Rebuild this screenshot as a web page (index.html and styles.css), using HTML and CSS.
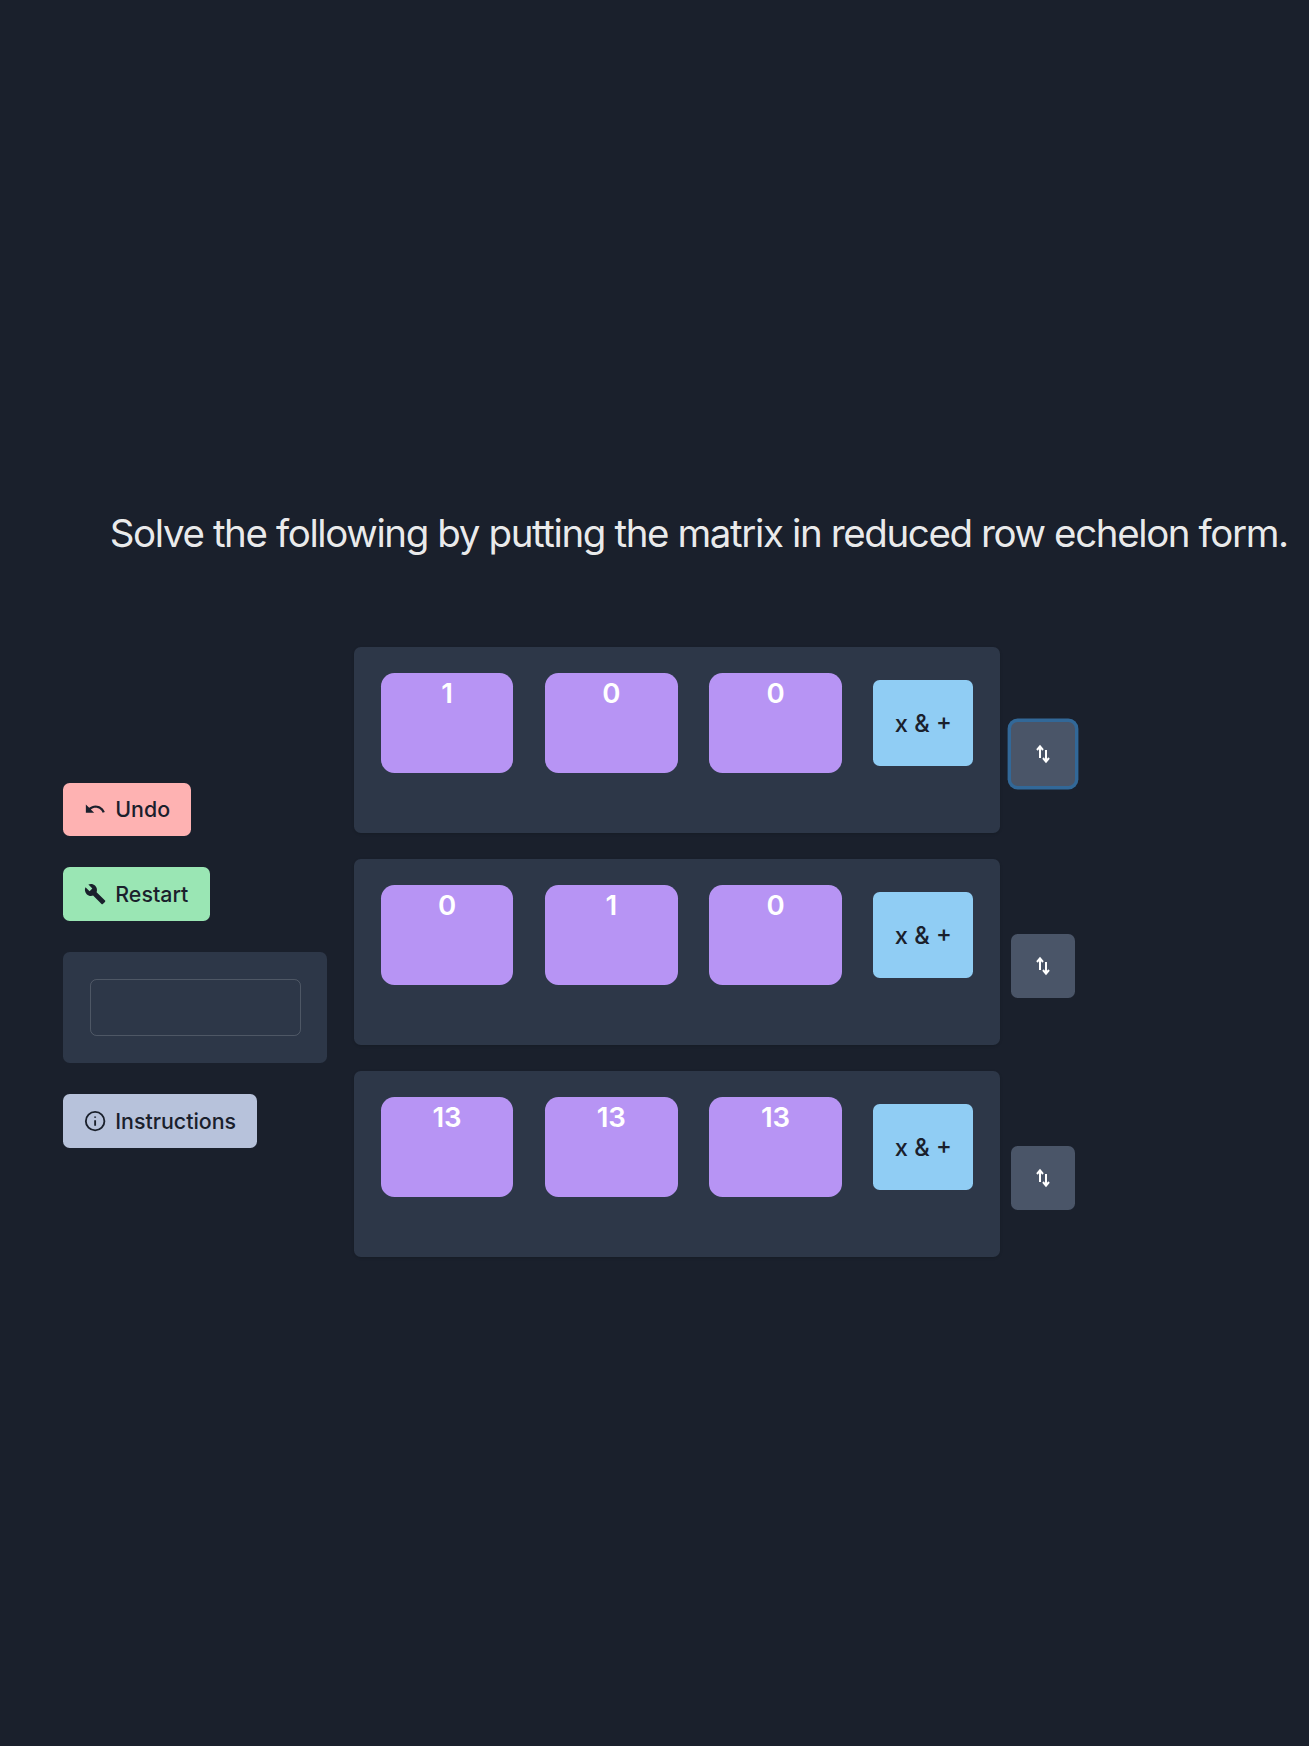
FILE: index.html
```html
<!DOCTYPE html>
<html lang="en">
<head>
  <meta charset="UTF-8" />
  <title>Matrix Game</title>
  <link rel="stylesheet" href="styles.css">
</head>
<body>
  <div class="page">
    <h1 class="prompt">Solve the following by putting the matrix in reduced row echelon form.</h1>

    <div class="game">
      <div class="side">
        <button class="btn btn-undo">
          <svg class="icon" viewBox="0 0 24 24"><path d="M12.5 8c-2.65 0-5.05.99-6.9 2.6L2 7v9h9l-3.62-3.62c1.39-1.16 3.16-1.88 5.12-1.88 3.54 0 6.55 2.31 7.6 5.5l2.37-.78C21.08 11.03 17.15 8 12.5 8z"/></svg>
          Undo
        </button>
        <button class="btn btn-restart">
          <svg class="icon" viewBox="0 0 24 24"><path d="M22.7 19l-9.1-9.1c.9-2.3.4-5-1.5-6.9-2-2-5-2.4-7.4-1.3L9 6 6 9 1.6 4.7C.4 7.1.9 10.1 2.9 12.1c1.9 1.9 4.6 2.4 6.9 1.5l9.1 9.1c.4.4 1 .4 1.4 0l2.3-2.3c.5-.4.5-1.1.1-1.4z"/></svg>
          Restart
        </button>
        <div class="answer-box">
          <input class="answer" type="text">
        </div>
        <button class="btn btn-help">
          <svg class="icon icon-info" viewBox="0 0 24 24"><circle cx="12" cy="12" r="10"/><path d="M12 11v6M12 7v1.4"/></svg>
          Instructions
        </button>
      </div>

      <div class="rows">
        <div class="row">
          <div class="row-panel">
            <div class="cell">1</div>
            <div class="cell">0</div>
            <div class="cell">0</div>
            <button class="ops">x &amp; +</button>
          </div>
          <button class="swap swap-focus">
            <svg class="swap-icon" viewBox="0 0 16 20"><path d="M5 14V3M2 6l3-3.6L8 6"/><path d="M11 6v11M8 14l3 3.6L14 14"/></svg>
          </button>
        </div>
        <div class="row">
          <div class="row-panel">
            <div class="cell">0</div>
            <div class="cell">1</div>
            <div class="cell">0</div>
            <button class="ops">x &amp; +</button>
          </div>
          <button class="swap">
            <svg class="swap-icon" viewBox="0 0 16 20"><path d="M5 14V3M2 6l3-3.6L8 6"/><path d="M11 6v11M8 14l3 3.6L14 14"/></svg>
          </button>
        </div>
        <div class="row">
          <div class="row-panel">
            <div class="cell">13</div>
            <div class="cell">13</div>
            <div class="cell">13</div>
            <button class="ops">x &amp; +</button>
          </div>
          <button class="swap">
            <svg class="swap-icon" viewBox="0 0 16 20"><path d="M5 14V3M2 6l3-3.6L8 6"/><path d="M11 6v11M8 14l3 3.6L14 14"/></svg>
          </button>
        </div>
      </div>
    </div>
  </div>
</body>
</html>
```

FILE: styles.css
```css
html {
  font-size: 17.81px;
}

body {
  margin: 0;
  background: #1a202c;
  color: #fff;
  font-family: 'Inter', sans-serif;
}

.page {
  min-height: 1746px;
  box-sizing: border-box;
  padding: 507.5px 0 0 62.8px;
}

.prompt {
  margin: 0 0 89.5px 47px;
  font-size: 38.5px;
  font-weight: 400;
  line-height: 50px;
  letter-spacing: -1.39px;
  color: rgba(255, 255, 255, 0.92);
  white-space: nowrap;
}

.game {
  display: flex;
  gap: 1.5rem;
}

.side {
  width: 264.5px;
  margin-top: 135.5px;
  display: flex;
  flex-direction: column;
  align-items: flex-start;
  gap: 31.5px;
}

.btn {
  height: 3rem;
  padding: 0 1.2rem;
  display: flex;
  align-items: center;
  gap: 0.5rem;
  border: none;
  border-radius: 0.375rem;
  color: #1a202c;
  font-family: inherit;
  font-size: 1.2rem;
  font-weight: 550;
  cursor: pointer;
}

.icon {
  width: 1.25rem;
  height: 1.25rem;
  fill: currentColor;
}

.icon-info {
  fill: none;
  stroke: currentColor;
  stroke-width: 2;
}

.btn-undo { background: #feb2b2; }
.btn-restart { background: #9ae6b4; }
.btn-help { background: #b7c2db; }

.answer-box {
  width: 100%;
  box-sizing: border-box;
  padding: 1.5rem;
  background: #2d3748;
  border-radius: 0.375rem;
}

.answer {
  display: block;
  width: 100%;
  height: 57px;
  box-sizing: border-box;
  background: transparent;
  border: 1px solid rgba(255, 255, 255, 0.16);
  border-radius: 0.375rem;
}

.rows {
  display: flex;
  flex-direction: column;
  gap: 1.5rem;
}

.row {
  display: flex;
  align-items: flex-start;
  gap: 11px;
}

.row-panel {
  width: 646px;
  height: 185.5px;
  box-sizing: border-box;
  padding: 26px 1.5rem;
  display: flex;
  align-items: flex-start;
  gap: 31.5px;
  background: #2d3748;
  border-radius: 0.375rem;
  box-shadow: 0 1px 3px rgba(0, 0, 0, 0.15);
}

.cell {
  width: 133px;
  height: 100px;
  background: #b794f4;
  border-radius: 0.75rem;
  color: #fff;
  font-size: 1.55rem;
  font-weight: 600;
  line-height: 40px;
  text-align: center;
}

.ops {
  width: 100px;
  height: 86px;
  margin-top: 7px;
  background: #90cdf4;
  border: none;
  border-radius: 0.375rem;
  color: #1a202c;
  font-family: inherit;
  font-size: 1.33rem;
  font-weight: 550;
  cursor: pointer;
}

.swap {
  width: 64px;
  height: 64px;
  margin-top: 75px;
  padding: 0;
  display: flex;
  align-items: center;
  justify-content: center;
  background: #4a5568;
  border: none;
  border-radius: 0.375rem;
  cursor: pointer;
}

.swap-focus {
  box-shadow: 0 0 0 3.4px rgba(66, 153, 225, 0.6);
}

.swap-icon {
  width: 16px;
  height: 20px;
  fill: none;
  stroke: #fff;
  stroke-width: 2;
}
```
